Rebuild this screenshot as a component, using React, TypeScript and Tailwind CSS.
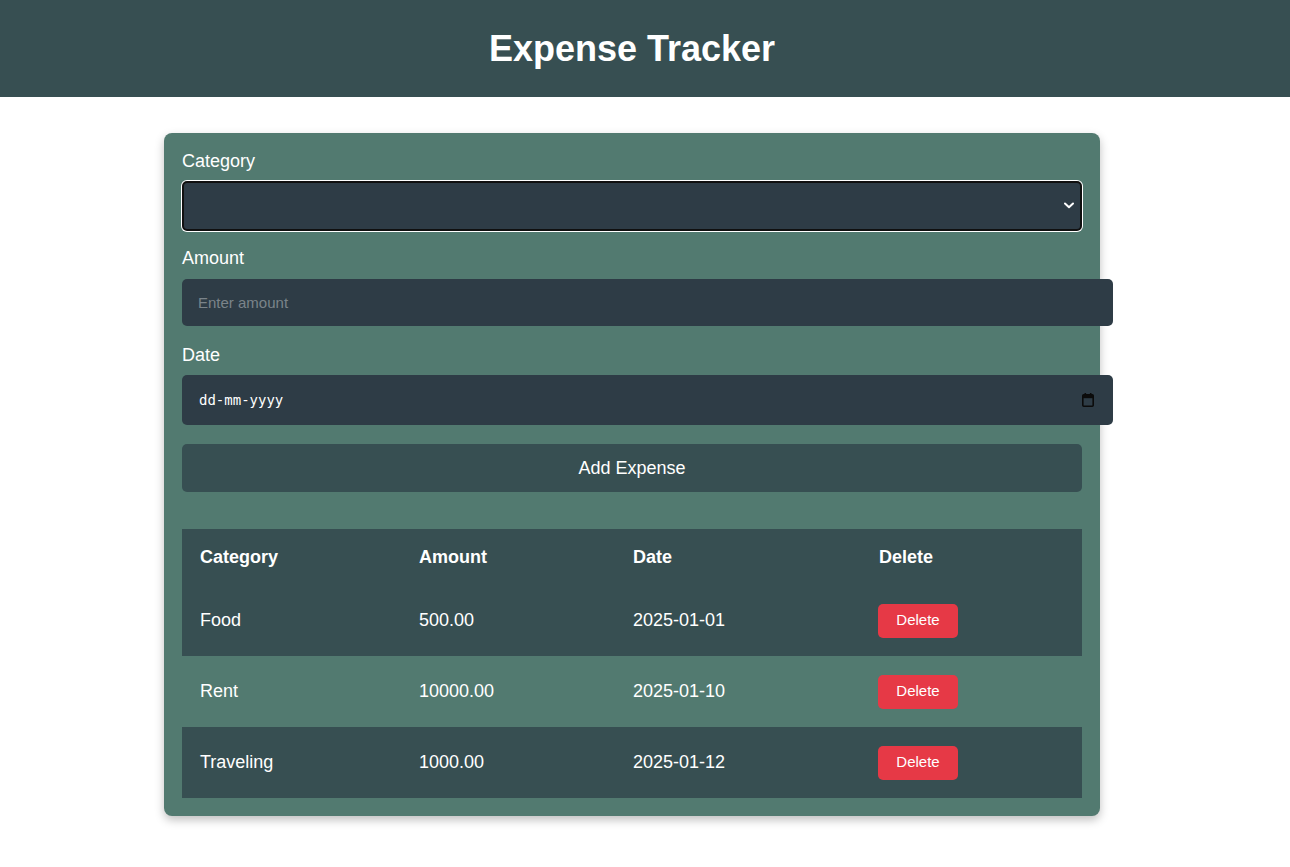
import React from "react";

const rows = [
  { category: "Food", amount: "500.00", date: "2025-01-01", dark: true },
  { category: "Rent", amount: "10000.00", date: "2025-01-10", dark: false },
  { category: "Traveling", amount: "1000.00", date: "2025-01-12", dark: true },
];

export default function App() {
  return (
    <div className="min-h-[867px] bg-white font-['Liberation_Sans',Arial,sans-serif] text-white">
      <header className="h-[97px] w-full bg-[#374f52]">
        <div className="flex h-full w-[1264px] items-center justify-center">
          <h1 className="text-[36px] font-bold leading-none">Expense Tracker</h1>
        </div>
      </header>

      <div className="w-[1264px] pt-[36px]">
        <div className="mx-auto w-[936px] rounded-[8px] bg-[#527a70] p-[18px] shadow-[0_4px_10px_rgba(0,0,0,0.25)]">
          <label className="block text-[18px] leading-[21px]">Category</label>
          <div className="relative mt-[9px] h-[50px] w-[900px]">
            <select className="h-full w-full appearance-none rounded-[5px] border-2 border-[#101010] bg-[#2e3c46] text-white ring-1 ring-white outline-none">
              <option></option>
            </select>
            <svg
              className="pointer-events-none absolute right-[8px] top-[21px]"
              width="10"
              height="7"
              viewBox="0 0 10 7"
              fill="none"
            >
              <path d="M1 1.5 L5 5.2 L9 1.5" stroke="white" strokeWidth="2" strokeLinecap="round" strokeLinejoin="round" />
            </svg>
          </div>

          <label className="mt-[17px] block text-[18px] leading-[21px]">Amount</label>
          <input
            className="mt-[10px] block h-[47px] w-[931px] rounded-[5px] bg-[#2e3c46] px-[16px] text-[15px] text-white placeholder:text-[#7b848a] outline-none"
            placeholder="Enter amount"
          />

          <label className="mt-[19px] block text-[18px] leading-[21px]">Date</label>
          <div className="mt-[9px] flex h-[50px] w-[931px] items-center justify-between rounded-[5px] bg-[#2e3c46] pl-[17px] pr-[19px]">
            <span className="font-['DejaVu_Sans_Mono',monospace] text-[14px] text-white">dd-mm-yyyy</span>
            <svg width="12" height="14" viewBox="0 0 12 14">
              <rect x="2.5" y="0" width="1.6" height="3" fill="#0b0b0b" />
              <rect x="7.9" y="0" width="1.6" height="3" fill="#0b0b0b" />
              <rect x="0.8" y="1.8" width="10.4" height="11.4" rx="1" fill="none" stroke="#0b0b0b" strokeWidth="1.6" />
              <rect x="0.8" y="1.8" width="10.4" height="3.4" fill="#0b0b0b" />
            </svg>
          </div>

          <button className="mt-[19px] flex h-[48px] w-[900px] items-center justify-center rounded-[5px] bg-[#374f52] text-[18px] text-white">
            Add Expense
          </button>

          <table className="mt-[37px] w-[900px] border-collapse text-left text-[18px]">
            <thead>
              <tr className="h-[56px] bg-[#374f52]">
                <th className="w-[219px] pl-[18px] font-bold">Category</th>
                <th className="w-[214px] pl-[18px] font-bold">Amount</th>
                <th className="w-[246px] pl-[18px] font-bold">Date</th>
                <th className="pl-[18px] font-bold">Delete</th>
              </tr>
            </thead>
            <tbody>
              {rows.map((r) => (
                <tr key={r.category} className={r.dark ? "h-[71px] bg-[#374f52]" : "h-[71px]"}>
                  <td className="pl-[18px]">{r.category}</td>
                  <td className="pl-[18px]">{r.amount}</td>
                  <td className="pl-[18px]">{r.date}</td>
                  <td className="pl-[17px]">
                    <button className="h-[34px] w-[80px] rounded-[5px] bg-[#e63946] text-[15px] text-white">
                      Delete
                    </button>
                  </td>
                </tr>
              ))}
            </tbody>
          </table>
        </div>
      </div>
    </div>
  );
}
